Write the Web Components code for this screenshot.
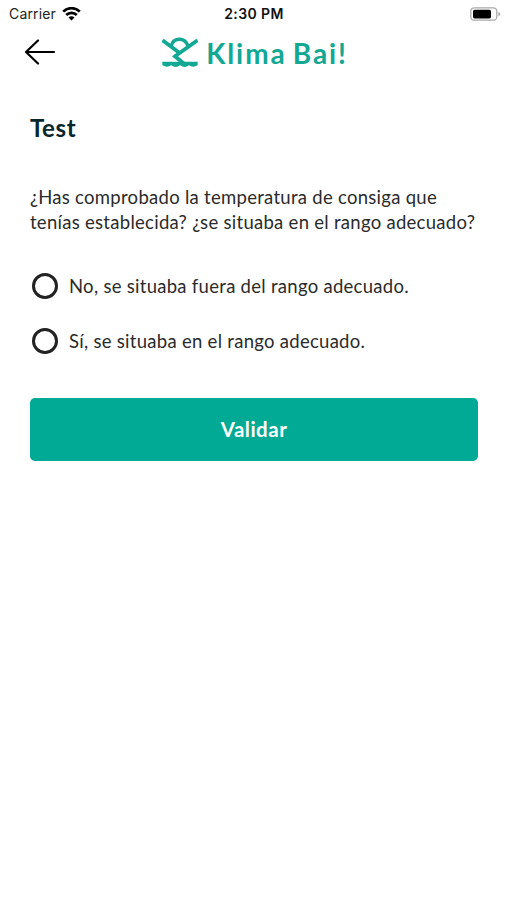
<!DOCTYPE html>
<html lang="es">
<head>
<meta charset="utf-8">
<meta name="viewport" content="width=device-width, initial-scale=1">
<title>Klima Bai!</title>
<style>
    body {
        margin: 0;
        background: #fff;
        font-family: Lato, "Noto Sans", sans-serif;
    }
</style>
</head>
<body>
<klima-screen>
    <status-bar slot="status" carrier="Carrier" time="2:30 PM"></status-bar>
    <app-header slot="header">Klima Bai!</app-header>
    <test-question heading="Test">
        <span>¿Has comprobado la temperatura de consiga que</span>
        <span>tenías establecida? ¿se situaba en el rango adecuado?</span>
        <radio-option slot="options">No, se situaba fuera del rango adecuado.</radio-option>
        <radio-option slot="options">Sí, se situaba en el rango adecuado.</radio-option>
    </test-question>
    <action-button slot="action">Validar</action-button>
</klima-screen>

<script>
class KlimaScreen extends HTMLElement {
    connectedCallback() {
        this.attachShadow({ mode: 'open' });
        this.shadowRoot.innerHTML = `
            <style>
                :host {
                    display: flex;
                    flex-direction: column;
                    min-height: 900px;
                    background: #fff;
                }

                main {
                    padding: 36px 29px 0 30px;
                }
            </style>

            <slot name="status"></slot>
            <slot name="header"></slot>
            <main>
                <slot></slot>
                <slot name="action"></slot>
            </main>
        `;
    }
}
customElements.define('klima-screen', KlimaScreen);

class StatusBar extends HTMLElement {
    connectedCallback() {
        this.attachShadow({ mode: 'open' });
        this.shadowRoot.innerHTML = `
            <style>
                :host {
                    display: grid;
                    grid-template-columns: 1fr auto 1fr;
                    align-items: center;
                    box-sizing: border-box;
                    height: 27px;
                    padding: 0 6px 0 9px;
                    font-family: Inter, sans-serif;
                    font-size: 14px;
                    color: #222;
                }

                .network {
                    display: flex;
                    align-items: center;
                    gap: 6px;
                }

                .carrier {
                    letter-spacing: 0.15px;
                }

                .time {
                    margin-left: -2px;
                    font-weight: 600;
                    letter-spacing: 0.4px;
                    color: #111;
                }

                .battery {
                    justify-self: end;
                }

                svg {
                    display: block;
                }
            </style>

            <div class="network">
                <span class="carrier">${this.getAttribute('carrier')}</span>
                <svg width="19" height="14" viewBox="0 0 19 14" fill="none" stroke="#000" stroke-width="2.7">
                    <path d="M1.2 4.6a11.8 11.8 0 0 1 16.6 0"/>
                    <path d="M4.2 8a7.5 7.5 0 0 1 10.6 0"/>
                    <path d="M9.5 13.4 6.5 10.4a4.2 4.2 0 0 1 6 0z" fill="#000" stroke="none"/>
                </svg>
            </div>
            <span class="time">${this.getAttribute('time')}</span>
            <svg class="battery" width="31" height="14" viewBox="0 0 31 14">
                <rect x=".8" y=".8" width="26" height="12.4" rx="3.5" fill="#fff" stroke="#aaa" stroke-width="1.3"/>
                <rect x="3" y="2.8" width="18" height="8.6" rx="1.6"/>
                <path d="M28.4 4.8v4.6q2-.8 2-2.3t-2-2.3z" fill="#aaa"/>
            </svg>
        `;
    }
}
customElements.define('status-bar', StatusBar);

class AppHeader extends HTMLElement {
    connectedCallback() {
        this.attachShadow({ mode: 'open' });
        this.shadowRoot.innerHTML = `
            <style>
                :host {
                    display: grid;
                    grid-template-columns: 1fr auto 1fr;
                    align-items: center;
                    box-sizing: border-box;
                    height: 50px;
                    padding: 0 21px 0 24px;
                }

                button {
                    justify-self: start;
                    padding: 0;
                    border: 0;
                    background: none;
                }

                svg {
                    display: block;
                }

                .brand {
                    display: flex;
                    align-items: center;
                    gap: 8px;
                    color: #12a893;
                }

                .name {
                    font-family: Lato, sans-serif;
                    font-size: 28px;
                    font-weight: 700;
                    line-height: 32px;
                    letter-spacing: 1.9px;
                    word-spacing: -2.5px;
                    white-space: nowrap;
                    padding-top: 1px;
                }
            </style>

            <button aria-label="Volver">
                <svg width="32" height="26" viewBox="0 0 32 26" fill="none" stroke="#000" stroke-width="2.2" stroke-linecap="round" stroke-linejoin="round">
                    <path d="M30 13H2M14 1.5 2 13l12 11.5"/>
                </svg>
            </button>
            <div class="brand">
                <svg width="36" height="31" viewBox="0 0 36 31" fill="none" stroke="currentColor" stroke-width="3.8">
                    <path d="M.5 3.2 18 16.2"/>
                    <path d="M35.5 3.2 13 19.3 21.5 26.2"/>
                    <path d="M9 9.6C11 .4 22.6-.6 26.2 9.4" stroke-width="3.4"/>
                    <path d="M.3 24.7H35.7v3.2q-4.4 3.4-8.8.3-4.4 3.4-8.8 0-4.5 3.4-8.9 0-4.5 3.1-8.9-.3z" fill="currentColor" stroke="none"/>
                </svg>
                <span class="name"><slot></slot></span>
            </div>
        `;
    }
}
customElements.define('app-header', AppHeader);

class TestQuestion extends HTMLElement {
    connectedCallback() {
        this.attachShadow({ mode: 'open' });
        this.shadowRoot.innerHTML = `
            <style>
                :host {
                    display: block;
                }

                h1 {
                    margin: 0 0 42px;
                    font-size: 24px;
                    font-weight: 700;
                    line-height: 30px;
                    letter-spacing: 0.6px;
                    color: #08262b;
                }

                .text {
                    display: flex;
                    flex-direction: column;
                    font-size: 18.5px;
                    line-height: 25px;
                    letter-spacing: 0.28px;
                    color: #2b2b2b;
                    white-space: nowrap;
                }

                .options {
                    display: flex;
                    flex-direction: column;
                    gap: 25px;
                    padding: 36px 0 42px 2px;
                }
            </style>

            <h1>${this.getAttribute('heading')}</h1>
            <div class="text"><slot></slot></div>
            <div class="options"><slot name="options"></slot></div>
        `;
    }
}
customElements.define('test-question', TestQuestion);

class RadioOption extends HTMLElement {
    connectedCallback() {
        this.attachShadow({ mode: 'open' });
        this.shadowRoot.innerHTML = `
            <style>
                :host {
                    display: flex;
                    align-items: center;
                    gap: 11px;
                    height: 30px;
                    font-size: 18.5px;
                    letter-spacing: 0.28px;
                    color: #2b2b2b;
                    white-space: nowrap;
                }

                .circle {
                    box-sizing: border-box;
                    width: 26px;
                    height: 26px;
                    border: 3px solid #222;
                    border-radius: 50%;
                }
            </style>

            <span class="circle"></span>
            <span><slot></slot></span>
        `;
    }
}
customElements.define('radio-option', RadioOption);

class ActionButton extends HTMLElement {
    connectedCallback() {
        this.attachShadow({ mode: 'open' });
        this.shadowRoot.innerHTML = `
            <style>
                :host {
                    display: block;
                }

                button {
                    display: block;
                    width: 100%;
                    height: 63px;
                    padding: 0 0 2px;
                    border: 0;
                    border-radius: 5px;
                    background: #00aa95;
                    color: #fff;
                    font-family: inherit;
                    font-size: 20.5px;
                    font-weight: 700;
                    letter-spacing: 0.5px;
                }
            </style>

            <button><slot></slot></button>
        `;
    }
}
customElements.define('action-button', ActionButton);
</script>
</body>
</html>
